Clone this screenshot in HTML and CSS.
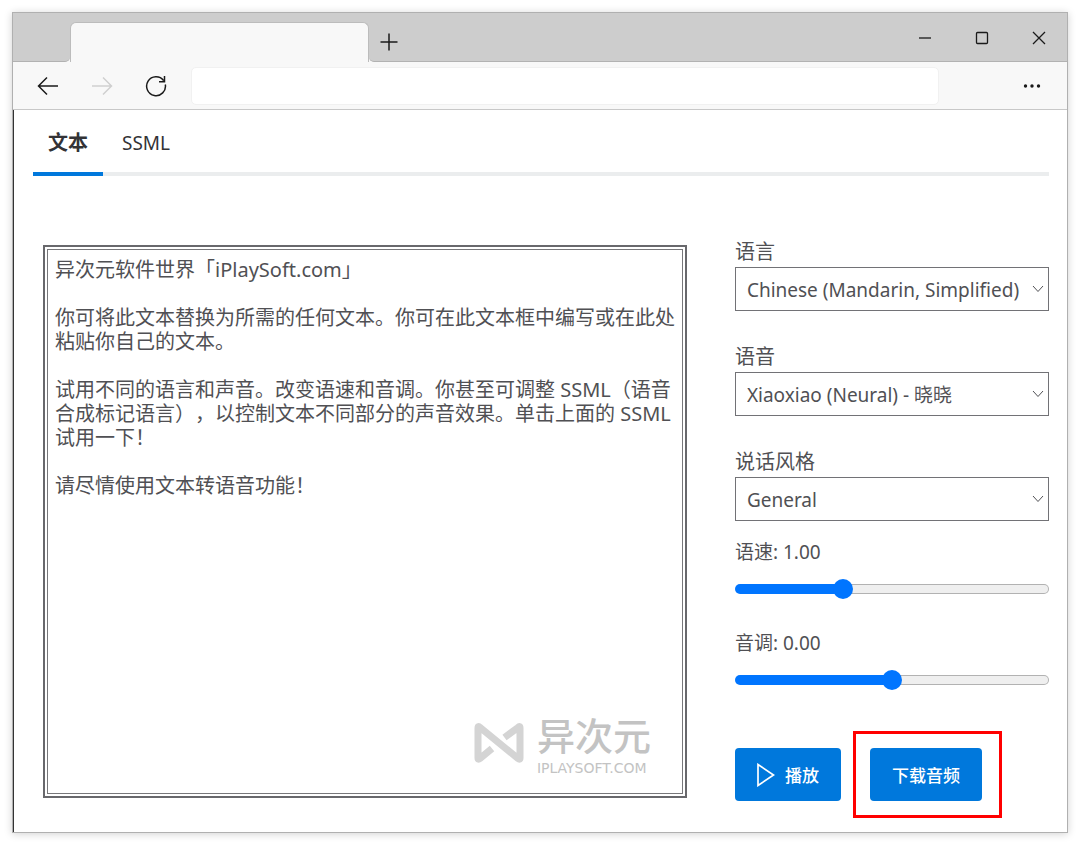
FILE: index.html
```html
<!DOCTYPE html>
<html lang="zh-CN">
<head>
<meta charset="utf-8">
<meta name="viewport" content="width=device-width, initial-scale=1">
<title>文本转语音</title>
<link rel="stylesheet" href="styles.css">
</head>
<body>
<div class="window">
  <header class="titlebar">
    <div class="titlebar-lead"></div>
    <div class="tab-slot"><div class="browser-tab"></div></div>
    <div class="titlebar-rest">
      <button class="new-tab" type="button" aria-label="新建标签页">
        <svg width="18" height="18" viewBox="0 0 18 18"><path d="M9 0.5V17.5M0.5 9H17.5"/></svg>
      </button>
      <div class="window-controls">
        <button type="button" aria-label="最小化"><svg width="14" height="14" viewBox="0 0 14 14"><path d="M1 7H13"/></svg></button>
        <button type="button" aria-label="最大化"><svg width="14" height="14" viewBox="0 0 14 14"><rect x="1.5" y="1.5" width="11" height="11" rx="1"/></svg></button>
        <button type="button" aria-label="关闭"><svg width="14" height="14" viewBox="0 0 14 14"><path d="M1 1L13 13M13 1L1 13"/></svg></button>
      </div>
    </div>
  </header>

  <nav class="toolbar" aria-label="浏览器">
    <button class="nav-button" type="button" aria-label="后退"><svg width="22" height="20" viewBox="0 0 22 20"><path d="M21 10H1.5M10 1.500L1.500 10L10 18.500"/></svg></button>
    <button class="nav-button" type="button" aria-label="前进" disabled><svg width="22" height="20" viewBox="0 0 22 20"><path d="M1 10H20.500M12 1.500L20.500 10L12 18.500"/></svg></button>
    <button class="nav-button" type="button" aria-label="刷新"><svg width="22" height="22" viewBox="0 0 22 22"><path d="M20.300 9.500A9.400 9.400 0 1 1 18.600 5.600M19.500 1V6.700H14"/></svg></button>
    <input class="address" type="text" aria-label="地址栏">
    <button class="more" type="button" aria-label="更多"><svg width="18" height="6" viewBox="0 0 18 6"><circle cx="2.500" cy="3" r="1.700"/><circle cx="9" cy="3" r="1.700"/><circle cx="15.500" cy="3" r="1.700"/></svg></button>
  </nav>

  <main class="page">
    <div class="tabs" role="tablist">
      <button class="tab is-active" type="button" role="tab" aria-selected="true">文本</button>
      <button class="tab" type="button" role="tab" aria-selected="false">SSML</button>
    </div>

    <div class="workspace">
      <div class="editor">
        <textarea class="editor-text" aria-label="文本" spellcheck="false">异次元软件世界「iPlaySoft.com」

你可将此文本替换为所需的任何文本。你可在此文本框中编写或在此处粘贴你自己的文本。

试用不同的语言和声音。改变语速和音调。你甚至可调整 SSML（语音合成标记语言），以控制文本不同部分的声音效果。单击上面的 SSML 试用一下！

请尽情使用文本转语音功能！</textarea>
        <div class="watermark">
          <svg width="50" height="42" viewBox="0 0 50 42"><path d="M18 26.500L6 36.500Q4 38 4 36V6Q4 3.500 6 5.500L44 36.500Q46 38 46 36V6Q46 3.500 44 5.500L30.500 15.500"/></svg>
          <div class="watermark-words">
            <span class="watermark-name">异次元</span>
            <span class="watermark-site">IPLAYSOFT.COM</span>
          </div>
        </div>
      </div>

      <form class="settings">
        <div class="field">
          <label for="language">语言</label>
          <div class="select-box">
            <select id="language"><option>Chinese (Mandarin, Simplified)</option></select>
            <svg width="12" height="8" viewBox="0 0 12 8"><path d="M1 1L6 6.500L11 1"/></svg>
          </div>
        </div>
        <div class="field">
          <label for="voice">语音</label>
          <div class="select-box">
            <select id="voice"><option>Xiaoxiao (Neural) - 晓晓</option></select>
            <svg width="12" height="8" viewBox="0 0 12 8"><path d="M1 1L6 6.500L11 1"/></svg>
          </div>
        </div>
        <div class="field">
          <label for="style">说话风格</label>
          <div class="select-box">
            <select id="style"><option>General</option></select>
            <svg width="12" height="8" viewBox="0 0 12 8"><path d="M1 1L6 6.500L11 1"/></svg>
          </div>
        </div>
        <div class="sliders">
          <div class="slider">
            <label for="rate">语速: 1.00</label>
            <input id="rate" type="range" min="0" max="3" step="0.01" value="1" style="--fill: 34%">
          </div>
          <div class="slider">
            <label for="pitch">音调: 0.00</label>
            <input id="pitch" type="range" min="-1" max="1" step="0.01" value="0" style="--fill: 50%">
          </div>
        </div>
        <div class="actions">
          <button class="action" type="button"><svg width="18" height="24" viewBox="0 0 18 24"><path d="M1 1.500V22.500L16.500 12Z"/></svg>播放</button>
          <div class="highlight"><button class="action" type="button">下载音频</button></div>
        </div>
      </form>
    </div>
  </main>
</div>
</body>
</html>
```
FILE: styles.css
```css
* { box-sizing: border-box; }

body {
  margin: 0;
  padding: 12px;
  background: #fff;
  color: #505054;
  font-family: "Noto Sans", "Noto Sans CJK SC", sans-serif;
  font-size: 20px;
  line-height: 24px;
  text-spacing-trim: space-all;
}

button, input, select, textarea {
  margin: 0;
  font-family: inherit;
  color: inherit;
  border-radius: 0;
}

button {
  display: flex;
  align-items: center;
  justify-content: center;
  padding: 0;
  border: 0;
  background: none;
}

svg { display: block; flex: none; fill: none; stroke: currentColor; }

.window {
  border: 1px solid #b0b0b0;
  background: #fff;
  box-shadow: 0 1px 8px rgba(0, 0, 0, 0.18);
}

/* Browser chrome */
.titlebar {
  display: flex;
  height: 49px;
  background: #f8f8f8;
  color: #1a1a1a;
}

.titlebar-lead {
  width: 57px;
  background: #cdcdcd;
  border-bottom: 1px solid #b2b2b2;
  border-radius: 0 0 5px 0;
}

.tab-slot {
  display: flex;
  flex: 0 1 299px;
  padding-top: 9px;
  background: linear-gradient(#cdcdcd 20px, #f8f8f8 20px);
}

.browser-tab {
  flex: 1;
  border: 1px solid #bcbcbc;
  border-bottom: 0;
  border-radius: 6px 6px 0 0;
  background: #f8f8f8;
}

.titlebar-rest {
  display: flex;
  flex: 1;
  justify-content: space-between;
  background: #cdcdcd;
  border-bottom: 1px solid #b2b2b2;
  border-radius: 0 0 0 5px;
}

.new-tab { width: 40px; padding-top: 9px; }
.new-tab svg { stroke-width: 1.5; }
.window-controls { display: flex; padding-top: 1px; }
.window-controls button { width: 57px; }
.window-controls svg { stroke-width: 1.3; }

.toolbar {
  display: flex;
  align-items: center;
  height: 48px;
  padding-left: 8px;
  background: #f8f8f8;
  border-bottom: 1px solid #c8c8c8;
  color: #1a1a1a;
}

.nav-button { width: 54px; height: 40px; }
.nav-button svg { stroke-width: 1.5; }
.nav-button:disabled { color: #cfcfcf; }

.address {
  flex: 1;
  min-width: 0;
  height: 38px;
  margin: 0 58px 0 8px;
  padding: 0 12px;
  border: 1px solid #f1f1f1;
  border-radius: 5px;
  background: #fff;
  font-size: 17px;
}

.more { width: 70px; height: 40px; }
.more svg { fill: currentColor; stroke: none; }

/* Page */
.page {
  padding: 0 18px 14px 19px;
  border-left: 1px solid #333;
}

.tabs {
  display: flex;
  gap: 4px;
  box-shadow: inset 0 -4px #ebedee;
}

.tab {
  padding: 21px 15px 17px;
  border-bottom: 4px solid transparent;
  color: #333336;
  font-size: 19px;
  line-height: 24px;
}

.tab.is-active { border-color: #0078dc; font-size: 20px; font-weight: 700; }

.workspace {
  display: grid;
  grid-template-columns: minmax(0, 41fr) minmax(0, 20fr);
  gap: 48px;
  padding: 64px 0 0 10px;
}

.editor {
  position: relative;
  display: flex;
  margin: 5px 0 20px;
  padding: 2px;
  border: 2px solid #68686c;
}

.editor-text {
  flex: 1;
  min-width: 0;
  padding: 8px 4px 8px 7px;
  border: 1px solid #77777a;
  background: #fff;
  font-size: 20px;
  line-height: 24px;
  resize: none;
  overflow: hidden;
}

.watermark {
  position: absolute;
  right: 34px;
  bottom: 20px;
  display: flex;
  align-items: flex-start;
  gap: 13px;
  color: #c3c3c3;
  pointer-events: none;
}

.watermark svg { margin-top: 5px; stroke: #d4d4d4; stroke-width: 7; }
.watermark-words { display: flex; flex-direction: column; gap: 7px; }
.watermark-name { font-size: 38px; font-weight: 500; line-height: 36px; }
.watermark-site { font-family: "DejaVu Sans", sans-serif; font-size: 14px; line-height: 16px; }

.settings { min-width: 0; }

.field { display: flex; flex-direction: column; gap: 3px; }
.field + .field { margin-top: 34px; }

.select-box { display: grid; align-items: center; }
.select-box > * { grid-area: 1 / 1; }
.select-box svg { justify-self: end; margin-right: 5px; pointer-events: none; }

select {
  width: 100%;
  height: 44px;
  padding: 2px 24px 0 11px;
  border: 1px solid #727276;
  background: #fff;
  font-size: 19px;
  appearance: none;
}

.sliders {
  display: flex;
  flex-direction: column;
  gap: 32px;
  margin-top: 19px;
  font-size: 19px;
}

.slider { display: flex; flex-direction: column; gap: 15px; }

input[type="range"] {
  width: 100%;
  height: 20px;
  background: none;
  appearance: none;
}

input[type="range"]::-webkit-slider-runnable-track {
  height: 10px;
  border: 1px solid transparent;
  border-radius: 5px;
  background:
    linear-gradient(#0075ff, #0075ff) 0 0 / var(--fill) 100% no-repeat border-box,
    linear-gradient(#efefef, #efefef) padding-box,
    linear-gradient(#b2b2b2, #b2b2b2) border-box;
}

input[type="range"]::-webkit-slider-thumb {
  width: 20px;
  height: 20px;
  margin-top: -6px;
  border-radius: 50%;
  background: #0075ff;
  appearance: none;
}

.actions {
  display: flex;
  align-items: center;
  gap: 12px;
  margin-top: 41px;
}

.action {
  gap: 10px;
  height: 53px;
  padding: 0 22px;
  border-radius: 4px;
  background: #0078dc;
  color: #fff;
  font-size: 17px;
  font-weight: 500;
  white-space: nowrap;
}

.action svg { stroke-width: 1.7; }

.highlight {
  padding: 14px 17px 14px 14px;
  border: 3px solid #f00;
}
```
